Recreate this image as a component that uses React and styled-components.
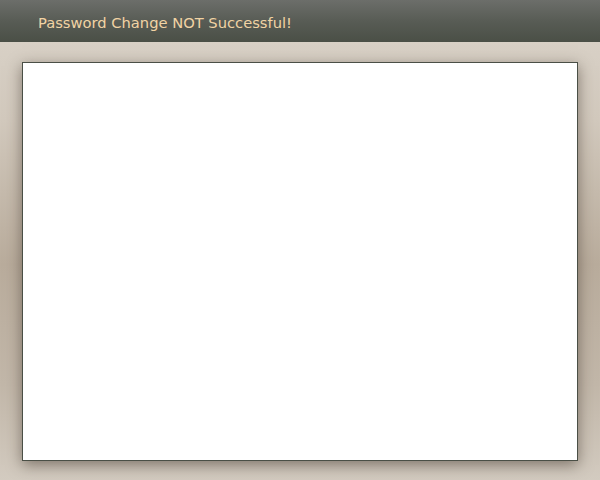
import React from "react";
import styled, { createGlobalStyle } from "styled-components";

const GlobalStyle = createGlobalStyle`
  html, body {
    margin: 0;
    padding: 0;
  }
  body {
    font-family: "DejaVu Sans", sans-serif;
  }
`;

const Page = styled.div`
  width: 600px;
  height: 480px;
  display: flex;
  flex-direction: column;
  background: linear-gradient(
    to bottom,
    #dbd4ca 0%,
    #d2c9bd 25%,
    #b9ac9c 55%,
    #c2b7a9 80%,
    #d3cbc0 100%
  );
  overflow: hidden;
`;

const Header = styled.div`
  height: 42px;
  box-sizing: border-box;
  display: flex;
  align-items: center;
  padding: 3px 0 0 38px;
  background: linear-gradient(to bottom, #6c6e6a 0%, #585c55 50%, #4a4f46 100%);
  color: #f1d3a4;
  font-size: 14.7px;
  flex-shrink: 0;
`;

const Body = styled.div`
  flex: 1;
  padding: 20px 22px 19px 22px;
  display: flex;
`;

const Panel = styled.div`
  flex: 1;
  background: #ffffff;
  border: 1px solid #4a4f46;
  box-shadow: 0 4px 14px rgba(60, 50, 40, 0.55);
`;

const App = () => {
  return (
    <>
      <GlobalStyle />
      <Page>
        <Header>Password Change NOT Successful!</Header>
        <Body>
          <Panel />
        </Body>
      </Page>
    </>
  );
};

export default App;
